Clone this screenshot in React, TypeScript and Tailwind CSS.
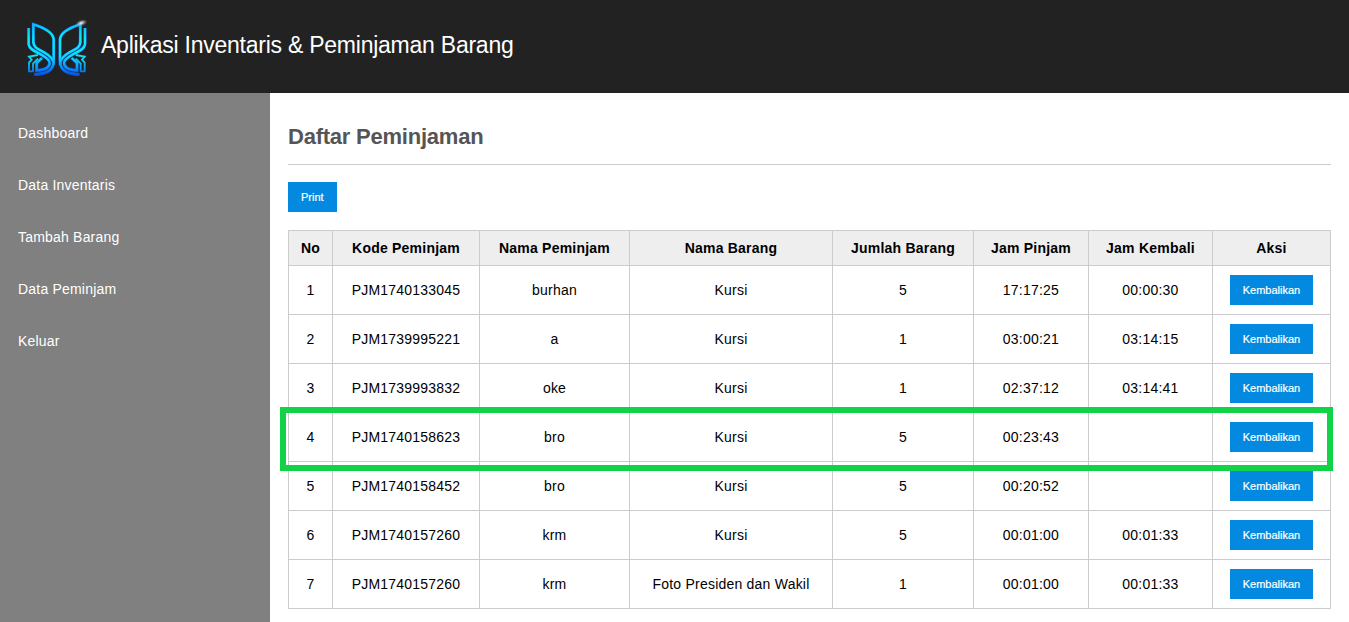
const menu = ["Dashboard", "Data Inventaris", "Tambah Barang", "Data Peminjam", "Keluar"];

const headings = ["No", "Kode Peminjam", "Nama Peminjam", "Nama Barang", "Jumlah Barang", "Jam Pinjam", "Jam Kembali", "Aksi"];

const rows = [
  ["1", "PJM1740133045", "burhan", "Kursi", "5", "17:17:25", "00:00:30"],
  ["2", "PJM1739995221", "a", "Kursi", "1", "03:00:21", "03:14:15"],
  ["3", "PJM1739993832", "oke", "Kursi", "1", "02:37:12", "03:14:41"],
  ["4", "PJM1740158623", "bro", "Kursi", "5", "00:23:43", ""],
  ["5", "PJM1740158452", "bro", "Kursi", "5", "00:20:52", ""],
  ["6", "PJM1740157260", "krm", "Kursi", "5", "00:01:00", "00:01:33"],
  ["7", "PJM1740157260", "krm", "Foto Presiden dan Wakil", "1", "00:01:00", "00:01:33"],
];

const wingPaths = [
  "M40 92V37C72 47 101 62 101 84V146C101 172 86 186 43 187",
  "M40 90C40 106 54 111 72 121C90 131 101 142 101 158",
  "M26 48V97C28 112 46 118 64 128C80 137 90 145 89 154C87 168 72 175 50 175V153L66 138",
];

const tailPaths = ["M54 129L27 134L35 143L27 152V178H39V155L54 140"];

function Wing() {
  return (
    <>
      <g fill="none" stroke="#0656d8" strokeWidth="9.5">
        {wingPaths.map((d) => (
          <path key={d} d={d} />
        ))}
      </g>
      <g fill="none" stroke="url(#wing)" strokeWidth="7">
        {wingPaths.map((d) => (
          <path key={d} d={d} />
        ))}
      </g>
      <g fill="none" stroke="url(#wing)" strokeWidth="5.5">
        {tailPaths.map((d) => (
          <path key={d} d={d} />
        ))}
      </g>
    </>
  );
}

function Logo() {
  return (
    <svg className="h-[72px] w-[76px] shrink-0" viewBox="0 0 228 216">
      <defs>
        <linearGradient id="wing" gradientUnits="userSpaceOnUse" x1="60" y1="30" x2="75" y2="192">
          <stop offset="0" stopColor="#0cb8f2" />
          <stop offset="0.3" stopColor="#0ceaf0" />
          <stop offset="0.65" stopColor="#10dcf4" />
          <stop offset="0.85" stopColor="#0a90f2" />
          <stop offset="1" stopColor="#083ee0" />
        </linearGradient>
        <radialGradient id="spark">
          <stop offset="0" stopColor="#ffffff" />
          <stop offset="0.35" stopColor="#c9d3d5" stopOpacity="0.75" />
          <stop offset="1" stopColor="#888888" stopOpacity="0" />
        </radialGradient>
      </defs>
      <Wing />
      <g transform="translate(221 0) scale(-1 1)">
        <Wing />
      </g>
      <ellipse cx="184" cy="33" rx="19" ry="10" fill="url(#spark)" transform="rotate(-18 184 33)" />
    </svg>
  );
}

function Action({ label }: { label: string }) {
  return (
    <button className="h-[30px] bg-[#038ae0] px-[13px] text-[11px] leading-[30px] text-white [-webkit-text-stroke:0.2px_white]">
      {label}
    </button>
  );
}

export default function App() {
  return (
    <div className="flex h-[622px] flex-col overflow-hidden bg-white font-['Liberation_Sans',Arial,sans-serif] text-[14px] text-black">
      <header className="flex h-[93px] shrink-0 items-start bg-[#222222] pt-3 pl-5">
        <Logo />
        <h1 className="mt-[17px] ml-[5px] text-[23px] leading-8 tracking-[-0.24px] whitespace-nowrap text-white">
          Aplikasi Inventaris &amp; Peminjaman Barang
        </h1>
      </header>
      <div className="flex min-h-0 flex-1">
        <nav className="w-[270px] shrink-0 bg-[#808080] pt-[14px]">
          {menu.map((item) => (
            <a key={item} href="#" className="flex h-[52px] items-center pl-[18px] tracking-[0.2px] text-white">
              {item}
            </a>
          ))}
        </nav>
        <main className="flex-1 pt-[26px] pr-[18px] pl-[18px]">
          <h2 className="h-[46px] border-b border-[#cccccc] text-[22px] leading-9 font-bold tracking-[-0.23px] text-[#555555]">
            Daftar Peminjaman
          </h2>
          <div className="mt-[17px] flex">
            <Action label="Print" />
          </div>
          <div className="relative mt-[18px]">
            <table className="w-[1043px] table-fixed border-separate border-spacing-0 border-t border-l border-[#cccccc] text-center tracking-[0.22px]">
              <colgroup>
                <col className="w-[44px]" />
                <col className="w-[147px]" />
                <col className="w-[150px]" />
                <col className="w-[203px]" />
                <col className="w-[141px]" />
                <col className="w-[115px]" />
                <col className="w-[124px]" />
                <col className="w-[118px]" />
              </colgroup>
              <thead>
                <tr className="h-[35px] bg-[#eeeeee]">
                  {headings.map((h) => (
                    <th key={h} className="border-r border-b border-[#cccccc] p-0 font-bold">
                      {h}
                    </th>
                  ))}
                </tr>
              </thead>
              <tbody>
                {rows.map((row) => (
                  <tr key={row[0]} className="h-[49px]">
                    {row.map((cell, i) => (
                      <td key={i} className="border-r border-b border-[#cccccc] p-0">
                        {cell}
                      </td>
                    ))}
                    <td className="border-r border-b border-[#cccccc] p-0">
                      <div className="flex justify-center tracking-normal">
                        <Action label="Kembalikan" />
                      </div>
                    </td>
                  </tr>
                ))}
              </tbody>
            </table>
            <div className="pointer-events-none absolute top-[177px] -left-2 h-[64px] w-[1053px] border-6 border-[#12d347]" />
          </div>
        </main>
      </div>
    </div>
  );
}
